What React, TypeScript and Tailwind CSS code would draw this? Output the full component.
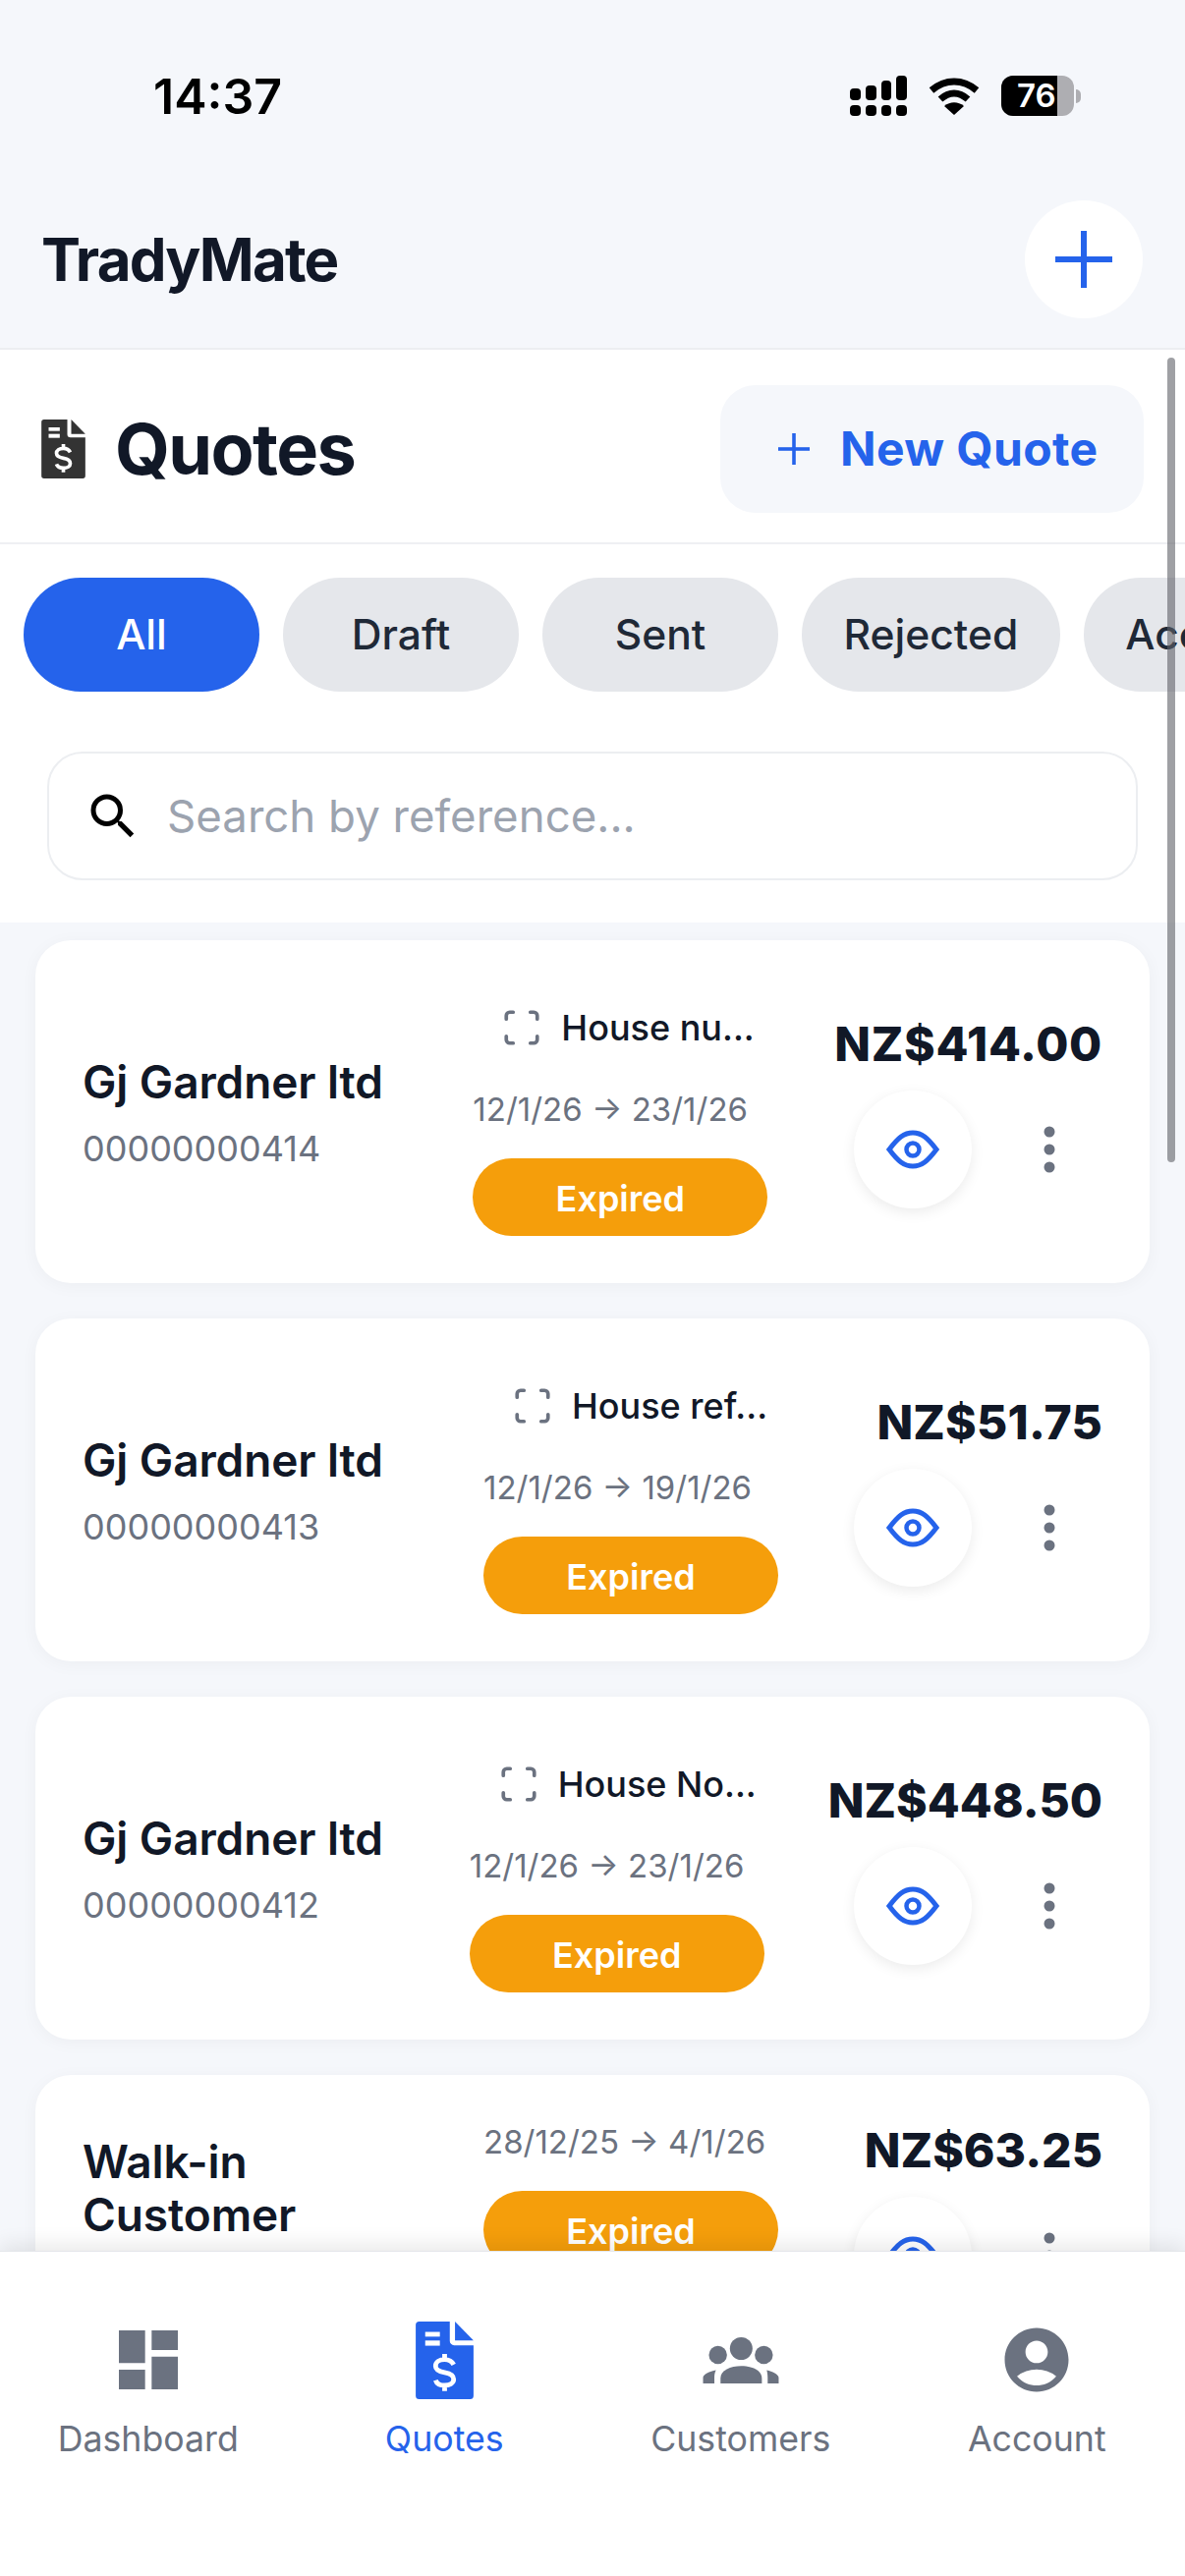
import { MdAccountCircle, MdDashboard, MdSearch } from "react-icons/md";
import { Scan } from "lucide-react";

function QuoteIcon({ className, fill }: { className: string; fill: string }) {
  return (
    <svg viewBox="0 0 134 180" className={className}>
      <path fill={fill} d="M8 0H79V45a10 10 0 0 0 10 10H134V172a8 8 0 0 1-8 8H8a8 8 0 0 1-8-8V8a8 8 0 0 1 8-8z" />
      <path fill={fill} d="M91 0L134 44H91Z" />
      <rect x="22" y="24" width="34" height="11" fill="#fff" />
      <rect x="22" y="44" width="34" height="12" fill="#fff" />
      <path
        fill="none"
        stroke="#fff"
        strokeWidth="11"
        d="M88 100C84 92 76 88 67 88C55 88 46 94 46 103C46 112 55 116 67 118C79 120 88 125 88 134C88 143 78 148 67 148C57 148 49 145 46 136M67 75V88M67 148V161"
      />
    </svg>
  );
}

function PeopleIcon() {
  return (
    <svg viewBox="0 0 234 146" className="w-[78px] h-[48px]" fill="#6b7280">
      <circle cx="46" cy="58" r="28" />
      <circle cx="188" cy="58" r="28" />
      <circle cx="118" cy="38" r="35" stroke="#fff" strokeWidth="16" paintOrder="stroke" />
      <path d="M54 146V130C54 105 85 92 118 92C151 92 182 105 182 130V146Z" />
      <path d="M0 146V128C0 118 20 108 40 105C36 112 35 120 35 130V146Z" />
      <path d="M234 146V128C234 118 214 108 197 105C199 112 200 120 200 130V146Z" />
    </svg>
  );
}

function EyeIcon() {
  return (
    <svg viewBox="0 0 54 40" className="w-[54px] h-[40px]" fill="none" stroke="#2563eb" strokeWidth="5">
      <path d="M3 20C12 8 18 3 27 3C36 3 42 8 51 20C42 32 36 37 27 37C18 37 12 32 3 20Z" />
      <circle cx="27" cy="20" r="6.5" strokeWidth="4.5" />
    </svg>
  );
}

function DotsIcon() {
  return (
    <svg viewBox="0 0 12 48" className="w-[12px] h-[48px]" fill="#6b7280">
      <circle cx="6" cy="6" r="5.5" />
      <circle cx="6" cy="24" r="5.5" />
      <circle cx="6" cy="42" r="5.5" />
    </svg>
  );
}

function PlusIcon({ className, w }: { className: string; w: number }) {
  return (
    <svg viewBox="0 0 58 58" className={className} fill="#2563eb">
      <rect x={29 - w / 2} y="0" width={w} height="58" />
      <rect x="0" y={29 - w / 2} width="58" height={w} />
    </svg>
  );
}

type Quote = {
  name: string;
  ref: string;
  house?: string;
  dates: string;
  price: string;
  gap: string;
  track: string;
};

const quotes: Quote[] = [
  { name: "Gj Gardner ltd", ref: "00000000414", house: "House nu...", dates: "12/1/26 → 23/1/26", price: "NZ$414.00", gap: "mr-[68px]", track: "tracking-[0.7px]" },
  { name: "Gj Gardner ltd", ref: "00000000413", house: "House ref...", dates: "12/1/26 → 19/1/26", price: "NZ$51.75", gap: "mr-[77px]", track: "tracking-[0.2px]" },
  { name: "Gj Gardner ltd", ref: "00000000412", house: "House No...", dates: "12/1/26 → 23/1/26", price: "NZ$448.50", gap: "mr-[65px]", track: "tracking-normal" },
  { name: "Walk-in Customer", ref: "00000000411", dates: "28/12/25 → 4/1/26", price: "NZ$63.25", gap: "mr-[77px]", track: "tracking-normal" },
];

function QuoteCard({ q }: { q: Quote }) {
  return (
    <div className="flex shrink-0 items-center bg-white rounded-[36px] p-[48px] shadow-[0_3px_18px_rgba(0,0,0,0.04)]">
      <div className="flex-1 min-w-0">
        <div className="max-w-[340px] text-[46px] leading-[54px] font-semibold tracking-[-0.1px] text-[#111827]">{q.name}</div>
        <div className="mt-[20px] text-[36px] leading-[42px] text-[#6b7280]">{q.ref}</div>
      </div>
      <div className={`w-[300px] shrink-0 self-start ${q.gap}`}>
        {q.house && (
          <div className="flex items-center h-[82px] mb-[22px] pl-[32px] gap-[22px]">
            <Scan size={42} strokeWidth={2.1} color="#6b7280" className="shrink-0 -mx-[3px]" />
            <span className="text-[36px] font-medium text-[#111827] whitespace-nowrap">{q.house}</span>
          </div>
        )}
        <div className="h-[40px] text-[33px] leading-[40px] text-[#6b7280] whitespace-nowrap">{q.dates}</div>
        <div className="mt-[30px] h-[79px] rounded-full bg-[#f59e0b] flex items-center justify-center text-[36px] pt-[2px] font-semibold text-white">
          Expired
        </div>
      </div>
      <div className="min-w-[253px] shrink-0 flex flex-col items-end">
        <div className={`text-[48px] leading-[58px] font-extrabold text-[#111827] whitespace-nowrap ${q.track}`}>{q.price}</div>
        <div className="mt-[18px] w-[253px] flex items-center justify-between">
          <div className="w-[120px] h-[120px] rounded-full bg-white flex items-center justify-center shadow-[0_4px_14px_rgba(0,0,0,0.08)]">
            <EyeIcon />
          </div>
          <div className="w-[72px] flex justify-center mr-[18px]">
            <DotsIcon />
          </div>
        </div>
      </div>
    </div>
  );
}

export default function App() {
  const tabClass =
    "min-w-[240px] px-[42.5px] h-[116px] shrink-0 rounded-full bg-[#e5e7eb] flex items-center justify-center text-[42.6px] font-medium text-[#1f2937]";
  return (
    <div className="relative w-[1206px] h-[2622px] overflow-hidden flex flex-col bg-[#f5f7fb] font-['Inter',sans-serif]">
      <div className="h-[196px] shrink-0 flex items-start justify-between pt-[66px]">
        <div className="ml-[156px] text-[50px] leading-[64px] font-semibold text-black">14:37</div>
        <div className="mr-[106px] mt-[11px] flex items-center gap-[22px]">
          <svg viewBox="0 0 58 41" className="w-[58px] h-[41px]" fill="#000">
            <rect x="0" y="13" width="11" height="12" rx="4" />
            <rect x="16" y="10" width="11" height="15" rx="4" />
            <rect x="32" y="5" width="10" height="20" rx="4" />
            <rect x="47" y="0" width="11" height="25" rx="4" />
            <rect x="0" y="30" width="11" height="11" rx="4" />
            <rect x="16" y="30" width="11" height="11" rx="4" />
            <rect x="32" y="30" width="10" height="11" rx="4" />
            <rect x="47" y="30" width="11" height="11" rx="4" />
          </svg>
          <svg viewBox="0 0 52 38" className="w-[52px] h-[38px]" fill="none" stroke="#000" strokeWidth="7">
            <path d="M3 13C17 1 35 1 49 13" />
            <path d="M12 22C21 14 31 14 40 22" />
            <path fill="#000" stroke="none" d="M26 38L16 29C22 24 30 24 36 29Z" />
          </svg>
          <div className="flex items-center">
            <div className="relative w-[74px] h-[41px] rounded-[12px] overflow-hidden bg-[#aeaeb2]">
              <div className="h-full w-[57px] bg-black" />
              <div className="absolute inset-0 left-[16px] text-[33px] leading-[41px] font-semibold text-white">76</div>
            </div>
            <div className="ml-[2px] w-[5px] h-[14px] rounded-r-full bg-[#aeaeb2]" />
          </div>
        </div>
      </div>

      <div className="shrink-0 flex items-center justify-between pl-[42px] pr-[43px] pt-[8px] pb-[30px] border-b-2 border-[#eceef1]">
        <div className="text-[60px] leading-[72px] font-bold tracking-[-1.8px] text-[#111827]">TradyMate</div>
        <div className="w-[120px] h-[120px] rounded-full bg-white flex items-center justify-center">
          <PlusIcon className="w-[58px] h-[58px]" w={6} />
        </div>
      </div>

      <div className="flex-1 min-h-0 overflow-hidden flex flex-col">
        <div className="shrink-0 bg-white">
          <div className="flex items-center justify-between pl-[42px] pr-[42px] pt-[36px] pb-[30px] border-b-2 border-[#eff0f3]">
            <div className="flex items-center gap-[30px]">
              <QuoteIcon className="w-[45px] h-[60px]" fill="#333333" />
              <div className="text-[72px] leading-[80px] font-bold tracking-[-1.6px] text-[#111827]">Quotes</div>
            </div>
            <div className="w-[431px] h-[130px] rounded-[36px] bg-[#f5f7fb] flex items-center pl-[59px] gap-[31px]">
              <PlusIcon className="w-[32px] h-[32px]" w={6.5} />
              <span className="text-[48px] font-bold tracking-[0.4px] text-[#2563eb] whitespace-nowrap">New Quote</span>
            </div>
          </div>
          <div className="mt-[34px] pl-[24px] flex gap-[24px] overflow-hidden">
            <div className="w-[240px] h-[116px] shrink-0 rounded-full bg-[#2563eb] flex items-center justify-center text-[42.6px] font-medium text-white">
              All
            </div>
            <div className={tabClass}>Draft</div>
            <div className={tabClass}>Sent</div>
            <div className={tabClass}>Rejected</div>
            <div className={tabClass}>Accepted</div>
          </div>
          <div className="mt-[61px] mx-[48px] mb-[43px] h-[131px] rounded-[36px] border-2 border-[#eceef1] flex items-center pl-[35px] gap-[25px]">
            <MdSearch size={60} color="#000" />
            <span className="pt-[2px] text-[45.6px] text-[#9ca3af]">Search by reference...</span>
          </div>
        </div>

        <div className="flex-1 min-h-0 flex flex-col gap-[36px] px-[36px] pt-[18px] overflow-hidden">
          {quotes.map((q) => (
            <QuoteCard key={q.ref} q={q} />
          ))}
        </div>
      </div>

      <div className="relative shrink-0 h-[331px] bg-white border-t border-[#e5e7eb] grid grid-cols-4 pt-[70px] shadow-[0_-6px_20px_rgba(0,0,0,0.09)]">
        <div className="flex flex-col items-center">
          <div className="h-[80px] flex items-center justify-center">
            <MdDashboard size={80} color="#6b7280" />
          </div>
          <span className="mt-[18px] text-[35.7px] leading-[44px] text-[#6b7280]">Dashboard</span>
        </div>
        <div className="flex flex-col items-center">
          <div className="h-[80px] flex items-center justify-center">
            <QuoteIcon className="w-[59px] h-[79px]" fill="#2563eb" />
          </div>
          <span className="mt-[18px] text-[35.7px] leading-[44px] text-[#2563eb]">Quotes</span>
        </div>
        <div className="flex flex-col items-center">
          <div className="h-[80px] flex items-center justify-center">
            <PeopleIcon />
          </div>
          <span className="mt-[18px] text-[35.7px] leading-[44px] text-[#6b7280]">Customers</span>
        </div>
        <div className="flex flex-col items-center">
          <div className="h-[80px] flex items-center justify-center">
            <MdAccountCircle size={78} color="#6b7280" />
          </div>
          <span className="mt-[18px] text-[35.7px] leading-[44px] text-[#6b7280]">Account</span>
        </div>
      </div>

      <div className="absolute left-[1188px] top-[364px] w-[8px] h-[819px] rounded-full bg-[#5f6068]/60" />
    </div>
  );
}
